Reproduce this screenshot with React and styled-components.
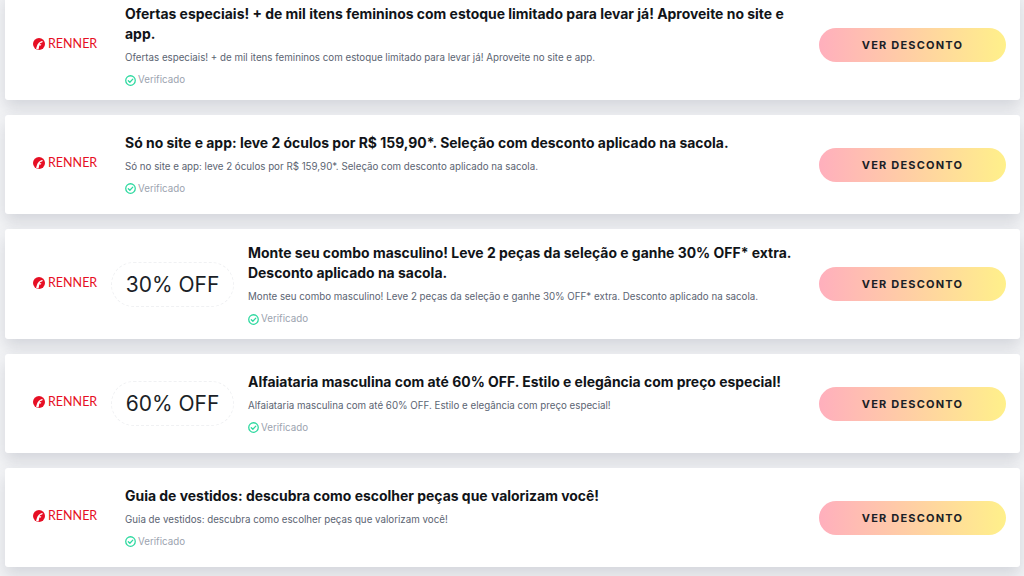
import React from "react";
import styled, { createGlobalStyle } from "styled-components";

const GlobalStyle = createGlobalStyle`
  html, body {
    margin: 0;
    padding: 0;
    height: 576px;
    overflow: hidden;
    background: #f3f4f6;
    font-family: "Inter", "Liberation Sans", sans-serif;
  }
`;

const List = styled.div`
  display: flex;
  flex-direction: column;
  gap: 15px;
  width: 1015px;
  margin-left: 5px;
  margin-top: -10px;
`;

const Card = styled.div`
  display: flex;
  align-items: center;
  box-sizing: border-box;
  min-height: 99px;
  padding: 14px 14px 12px 28px;
  background: #fff;
  border-radius: 3px;
  box-shadow: 0 8px 16px rgba(60, 66, 87, 0.17);
`;

const LogoBox = styled.div`
  display: flex;
  align-items: center;
  gap: 3px;
  width: 78px;
  flex-shrink: 0;
  margin-top: -5px;
  margin-right: ${(props) => (props.$tight ? 0 : 14)}px;
  color: #e60f24;
`;

const LogoText = styled.span`
  font-family: "Lato", sans-serif;
  font-size: 12.5px;
  line-height: 14px;
`;

const Badge = styled.div`
  display: flex;
  align-items: center;
  justify-content: center;
  box-sizing: border-box;
  width: 123px;
  height: 45px;
  flex-shrink: 0;
  margin: -2px 14px 0 0;
  border: 1px dashed #f0f1f3;
  border-radius: 23px;
  font-size: 21px;
  font-weight: 400;
  color: #1b1f27;
`;

const Body = styled.div`
  flex: 1;
  display: flex;
  flex-direction: column;
  align-items: flex-start;
  margin-top: ${(props) => (props.$short ? -2 : 0)}px;
`;

const Title = styled.div`
  font-size: 13.95px;
  line-height: 20px;
  font-weight: 700;
  color: #111418;
`;

const Desc = styled.div`
  margin-top: 6px;
  font-size: 9.75px;
  line-height: 16px;
  color: #5b6472;
`;

const Verified = styled.div`
  display: flex;
  align-items: center;
  gap: 2px;
  margin-top: 6px;
  font-size: 9.75px;
  line-height: 16px;
  color: #9ca3af;
`;

const Action = styled.button`
  width: 187px;
  height: 34px;
  flex-shrink: 0;
  margin: -2px 0 0 14px;
  padding: 0;
  border: none;
  border-radius: 17px;
  background: linear-gradient(90deg, #ffafbd 0%, #fff08a 100%);
  font-family: inherit;
  font-size: 11px;
  font-weight: 700;
  letter-spacing: 1.2px;
  color: #1b1f27;
`;

const RennerLogo = ({ tight }) => (
  <LogoBox $tight={tight}>
    <svg width="12" height="12" viewBox="0 0 13 13">
      <circle cx="6.5" cy="6.5" r="6.5" fill="#e60f24" />
      <path d="M3.4 12 C4.4 7.5 5.6 3.8 10.6 3.2 L10 5 C8.2 5.2 7.6 5.8 7.3 6.8 L9 6.8 L8.6 8.2 L6.9 8.2 L6 12.4 Z" fill="#fff" />
    </svg>
    <LogoText>RENNER</LogoText>
  </LogoBox>
);

const CheckIcon = () => (
  <svg width="11" height="11" viewBox="0 0 12 12" fill="none" stroke="#2ed9a0" strokeWidth="1.4">
    <circle cx="6" cy="6" r="5.2" />
    <path d="M3.6 6.2 L5.3 7.9 L8.5 4.5" strokeLinecap="round" strokeLinejoin="round" />
  </svg>
);

const offers = [
  {
    title: "Ofertas especiais! + de mil itens femininos com estoque limitado para levar já! Aproveite no site e app.",
    desc: "Ofertas especiais! + de mil itens femininos com estoque limitado para levar já! Aproveite no site e app.",
  },
  {
    short: true,
    title: "Só no site e app: leve 2 óculos por R$ 159,90*. Seleção com desconto aplicado na sacola.",
    desc: "Só no site e app: leve 2 óculos por R$ 159,90*. Seleção com desconto aplicado na sacola.",
  },
  {
    badge: "30% OFF",
    title: "Monte seu combo masculino! Leve 2 peças da seleção e ganhe 30% OFF* extra. Desconto aplicado na sacola.",
    desc: "Monte seu combo masculino! Leve 2 peças da seleção e ganhe 30% OFF* extra. Desconto aplicado na sacola.",
  },
  {
    short: true,
    badge: "60% OFF",
    title: "Alfaiataria masculina com até 60% OFF. Estilo e elegância com preço especial!",
    desc: "Alfaiataria masculina com até 60% OFF. Estilo e elegância com preço especial!",
  },
  {
    short: true,
    title: "Guia de vestidos: descubra como escolher peças que valorizam você!",
    desc: "Guia de vestidos: descubra como escolher peças que valorizam você!",
  },
];

const App = () => (
  <>
    <GlobalStyle />
    <List>
      {offers.map((item) => (
        <Card key={item.title}>
          <RennerLogo tight={Boolean(item.badge)} />
          {item.badge && <Badge>{item.badge}</Badge>}
          <Body $short={item.short}>
            <Title>{item.title}</Title>
            <Desc>{item.desc}</Desc>
            <Verified>
              <CheckIcon />
              Verificado
            </Verified>
          </Body>
          <Action>VER DESCONTO</Action>
        </Card>
      ))}
    </List>
  </>
);

export default App;
